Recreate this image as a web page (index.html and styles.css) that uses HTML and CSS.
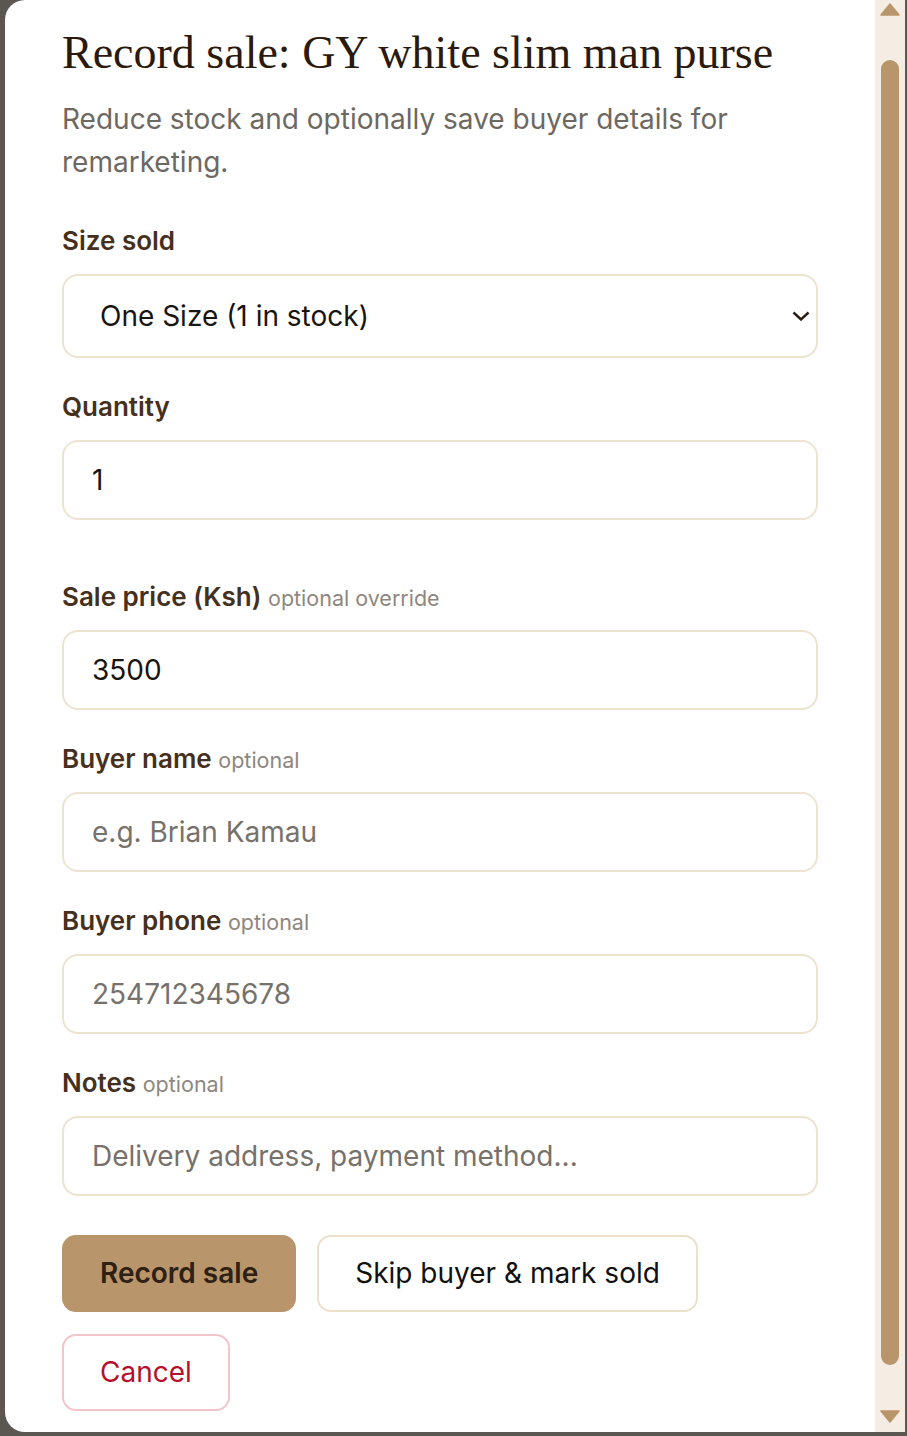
FILE: index.html
```
<!DOCTYPE html>
<html lang="en">

<head>
  <meta charset="UTF-8">
  <meta name="viewport" content="width=device-width, initial-scale=1.0">
  <title>Record sale</title>
  <link rel="stylesheet" href="styles.css">
</head>

<body>

  <div class="modal">
    <div class="modal-body">
      <h1 class="modal-title">Record sale: GY white slim man purse</h1>
      <p class="modal-sub">Reduce stock and optionally save buyer details for remarketing.</p>

      <form class="sale-form">
        <div class="field">
          <label class="field-label" for="size">Size sold</label>
          <div class="select-wrap">
            <select id="size" class="input select">
              <option>One Size (1 in stock)</option>
            </select>
            <svg class="chevron" width="18" height="10" viewBox="0 0 18 10">
              <path d="M1.5 1.5 L9 8.5 L16.5 1.5" fill="none" stroke="#2a1d12" stroke-width="2.4" />
            </svg>
          </div>
        </div>

        <div class="field field-spaced">
          <label class="field-label" for="qty">Quantity</label>
          <input id="qty" class="input" type="number" min="1" value="1">
        </div>

        <div class="field">
          <label class="field-label" for="price">Sale price (Ksh) <span class="opt">optional override</span></label>
          <input id="price" class="input" type="text" value="3500">
        </div>

        <div class="field">
          <label class="field-label" for="buyerName">Buyer name <span class="opt">optional</span></label>
          <input id="buyerName" class="input" type="text" placeholder="e.g. Brian Kamau">
        </div>

        <div class="field">
          <label class="field-label" for="buyerPhone">Buyer phone <span class="opt">optional</span></label>
          <input id="buyerPhone" class="input" type="text" placeholder="254712345678">
        </div>

        <div class="field">
          <label class="field-label" for="notes">Notes <span class="opt">optional</span></label>
          <input id="notes" class="input" type="text" placeholder="Delivery address, payment method...">
        </div>

        <div class="actions">
          <button type="button" class="btn btn-primary">Record sale</button>
          <button type="button" class="btn btn-outline">Skip buyer &amp; mark sold</button>
          <button type="button" class="btn btn-cancel">Cancel</button>
        </div>
      </form>
    </div>

    <!-- scrollbar look of the dialog -->
    <div class="scrollbar">
      <svg class="arrow" width="20" height="13" viewBox="0 0 20 13">
        <path d="M10 1 L19 12 L1 12 Z" fill="#b8956a" stroke="#b8956a" stroke-width="1.5" stroke-linejoin="round" />
      </svg>
      <div class="thumb"></div>
      <svg class="arrow" width="20" height="13" viewBox="0 0 20 13">
        <path d="M1 1 L19 1 L10 12 Z" fill="#b8956a" stroke="#b8956a" stroke-width="1.5" stroke-linejoin="round" />
      </svg>
    </div>
  </div>

</body>

</html>
```

FILE: styles.css
```
body {
  margin: 0;
  background-color: #5b5650;
  font-family: 'Inter', 'Noto Sans', sans-serif;
}

.modal {
  display: flex;
  width: 900px;
  height: 1432px;
  margin-left: 5px;
  background-color: #fff;
  border-radius: 20px 0 0 20px;
  overflow: hidden;
}

.modal-body {
  flex: 1;
  padding: 26px 57px 0 57px;
}

.modal-title {
  margin: 0;
  font-family: 'Liberation Serif', serif;
  font-weight: normal;
  font-size: 46px;
  line-height: 53px;
  color: #2b1a0c;
}

.modal-sub {
  margin: 19px 0 0;
  font-size: 28px;
  line-height: 43px;
  color: #6e6862;
}

.sale-form {
  display: flex;
  flex-direction: column;
  gap: 34px;
  margin-top: 42px;
}

.field {
  display: flex;
  flex-direction: column;
}

.field-spaced {
  margin-bottom: 28px;
}

.field-label {
  margin-bottom: 18px;
  font-size: 26px;
  line-height: 30px;
  font-weight: 600;
  color: #45301d;
}

.opt {
  font-size: 21.5px;
  line-height: 1;
  font-weight: normal;
  color: #8e8780;
}

.input {
  box-sizing: border-box;
  width: 100%;
  height: 80px;
  padding: 0 28px;
  font-family: inherit;
  font-size: 28px;
  color: #1a1410;
  background: #fff;
  border: 2px solid #ede3d1;
  border-radius: 16px;
  outline: none;
}

.input::placeholder {
  color: #77716b;
}

.input[type=number] {
  -moz-appearance: textfield;
}

.input::-webkit-inner-spin-button {
  -webkit-appearance: none;
}

.select-wrap {
  position: relative;
}

.select {
  height: 84px;
  padding-left: 36px;
  appearance: none;
  -webkit-appearance: none;
}

.chevron {
  position: absolute;
  right: 8px;
  top: 37px;
}

.actions {
  display: flex;
  flex-wrap: wrap;
  gap: 22px 21px;
  margin-top: 5px;
}

.btn {
  padding: 21px 36px;
  font-family: inherit;
  font-size: 28px;
  line-height: 31px;
  border-radius: 14px;
  cursor: pointer;
}

.btn-primary {
  font-weight: 600;
  color: #2e2013;
  background-color: #b8956a;
  border: 2px solid #b8956a;
}

.btn-outline {
  color: #111;
  background-color: #fff;
  border: 2px solid #ece0cb;
}

.btn-cancel {
  color: #b5102c;
  background-color: #fff;
  border: 2px solid #f2c5cb;
}

.scrollbar {
  display: flex;
  flex-direction: column;
  align-items: center;
  width: 30px;
  padding: 3px 0 9px;
  background-color: #f5ede3;
}

.thumb {
  flex: 1;
  width: 18px;
  margin: 44px 0 45px;
  background-color: #b8956a;
  border-radius: 9px;
}
```
